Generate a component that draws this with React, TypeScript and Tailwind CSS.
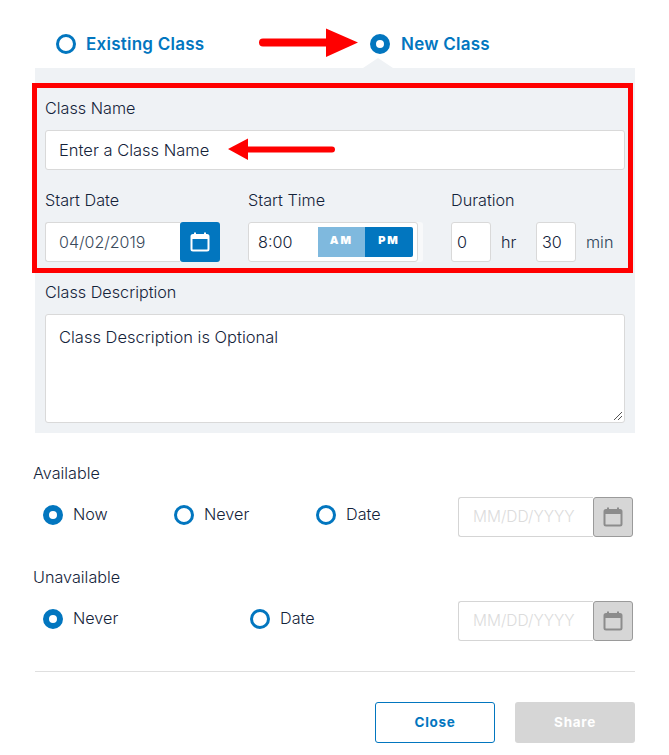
import React from "react";

function Radio({ on, label, bold, gap = "ml-[10px]" }: { on?: boolean; label: string; bold?: boolean; gap?: string }) {
  return (
    <div className="flex items-center">
      <span
        className={
          on
            ? "w-5 h-5 rounded-full border-[6px] border-[#0276bf] bg-white shrink-0"
            : "w-5 h-5 rounded-full border-[3px] border-[#0276bf] bg-white shrink-0"
        }
      />
      <span className={(bold ? "text-[17px] font-semibold tracking-[0.25px] mt-[1px] text-[#0276bf] " : "text-[16.2px] font-[350] -mt-[2px] text-[#14233a] ") + gap}>{label}</span>
    </div>
  );
}

function Cal({ color, className }: { color: string; className?: string }) {
  return (
    <svg width="20" height="20" viewBox="0 0 20 20" className={className} fill="none">
      <rect x="1.5" y="3" width="17" height="15.5" rx="1.5" stroke={color} strokeWidth="2" />
      <rect x="1.5" y="3" width="17" height="4" fill={color} />
      <rect x="4" y="0.5" width="2" height="3" fill={color} />
      <rect x="14" y="0.5" width="2" height="3" fill={color} />
    </svg>
  );
}

function DateDisabled() {
  return (
    <div className="flex w-[175px] h-10">
      <div className="w-[135px] h-10 border border-[#d5d5d5] rounded-l-[3px] border-r-0 bg-white pl-[14px] flex items-center text-[15.5px] font-[350] text-[#dcdcdc]">
        MM/DD/YYYY
      </div>
      <div className="w-10 h-10 bg-[#d6d6d6] border border-[#9a9a9a] rounded-[3px] flex items-center justify-center">
        <Cal color="#8c8c8c" />
      </div>
    </div>
  );
}

export default function App() {
  return (
    <div className="relative w-[669px] h-[755px] bg-white overflow-hidden font-['Inter','Noto_Sans',sans-serif] font-[350] text-[#14233a]">
      {/* top tabs */}
      <div className="h-[68px] pl-[56px] flex items-center pt-[20px] pb-0">
        <div className="flex items-center w-[314px]">
          <Radio label="Existing Class" bold />
        </div>
        <Radio on label="New Class" bold gap="ml-[11px]" />
      </div>

      {/* panel */}
      <div className="relative ml-[35px] w-[600px] h-[365px] bg-[#eff2f5] px-[10px] pt-[30px]">
        <div className="absolute left-[328px] -top-[10px] w-0 h-0 border-l-[15px] border-r-[15px] border-b-[10px] border-l-transparent border-r-transparent border-b-[#eff2f5]" />
        <div className="text-[16.2px] leading-5">Class Name</div>
        <div className="mt-[12px] h-10 w-[580px] bg-white border border-[#d9d9d9] rounded-[3px] pl-[13px] flex items-center text-[16.5px]">
          Enter a Class Name
        </div>

        <div className="flex mt-5">
          <div className="w-[203px]">
            <div className="text-[16.2px] leading-5">Start Date</div>
            <div className="mt-[12px] flex w-[175px] h-10">
              <div className="w-[135px] h-10 bg-white border border-[#d9d9d9] border-r-0 rounded-l-[3px] pl-[13px] flex items-center text-[16px] text-[#3a4a5c]">
                04/02/2019
              </div>
              <div className="w-10 h-10 bg-[#0276bf] rounded-[3px] flex items-center justify-center">
                <Cal color="#ffffff" />
              </div>
            </div>
          </div>

          <div className="w-[203px]">
            <div className="text-[16.2px] leading-5">Start Time</div>
            <div className="mt-[12px] w-[175px] h-10 flex items-center bg-[#f8f9fa] rounded-[3px]">
              <div className="w-[170px] h-10 bg-white border border-[#d9d9d9] rounded-[3px] pl-[9px] flex items-center text-[16.2px]">
                <span className="w-[60px]">8:00</span>
                <div className="flex h-[30px] w-[95px] text-[11px] font-black tracking-[2px] text-white">
                  <span className="w-[47px] bg-[#7fb9de] flex items-center justify-center pb-[3px]">AM</span>
                  <span className="w-[48px] bg-[#0276bf] rounded-r-[2px] flex items-center justify-center pb-[3px]">PM</span>
                </div>
              </div>
            </div>
          </div>

          <div>
            <div className="text-[16.2px] leading-5">Duration</div>
            <div className="mt-[12px] flex items-center h-10 text-[16.2px]">
              <div className="w-10 h-10 bg-white border border-[#d9d9d9] rounded-[3px] pl-[5px] flex items-center">0</div>
              <span className="ml-[10px] w-[35px]">hr</span>
              <div className="w-10 h-10 bg-white border border-[#d9d9d9] rounded-[3px] pl-[5px] flex items-center">30</div>
              <span className="ml-[10px] text-[#2c4258]">min</span>
            </div>
          </div>
        </div>

        <div className="mt-5 text-[16.2px] leading-5">Class Description</div>
        <div className="relative mt-[12px] w-[580px] h-[109px] bg-white border border-[#d9d9d9] rounded-[3px] pl-[13px] pt-[12px] text-[16.5px] leading-5">
          Class Description is Optional
          <svg width="10" height="10" viewBox="0 0 10 10" className="absolute right-[1px] bottom-[1px]">
            <path d="M1 9 L9 1 M5 9 L9 5" stroke="#555" strokeWidth="1" />
          </svg>
        </div>
      </div>

      {/* availability */}
      <div className="ml-[33px] w-[600px] mt-[30px]">
        <div className="text-[16.2px] leading-5">Available</div>
        <div className="flex items-start h-10 mt-[14px] pl-[10px]">
          <div className="w-[131px] h-9 flex items-center"><Radio on label="Now" /></div>
          <div className="w-[142px] h-9 flex items-center"><Radio label="Never" /></div>
          <div className="w-[142px] h-9 flex items-center"><Radio label="Date" /></div>
          <DateDisabled />
        </div>
        <div className="text-[16.2px] leading-5 mt-[30px]">Unavailable</div>
        <div className="flex items-start h-10 mt-[14px] pl-[10px]">
          <div className="w-[207px] h-9 flex items-center"><Radio on label="Never" /></div>
          <div className="w-[208px] h-9 flex items-center"><Radio label="Date" /></div>
          <DateDisabled />
        </div>
      </div>

      <div className="ml-[35px] w-[600px] h-px bg-[#dfdfdf] mt-[30px]" />

      <div className="ml-[375px] mt-[30px] flex gap-5">
        <div className="w-[120px] h-[41px] border border-[#0276bf] rounded-[3px] flex items-center justify-center text-[13.5px] font-bold tracking-[0.7px] text-[#0276bf]">
          Close
        </div>
        <div className="w-[120px] h-[41px] bg-[#d6d6d6] rounded-[3px] flex items-center justify-center text-[13.5px] font-bold tracking-[0.7px] text-white">
          Share
        </div>
      </div>

      {/* annotations */}
      <div className="absolute left-[32px] top-[83px] w-[601px] h-[190px] border-[5px] border-[#ff0000]" />
      <svg className="absolute left-[258px] top-[27px]" width="102" height="32" viewBox="0 0 102 32">
        <path d="M5 11.5 H68 V1.5 L100 15.5 L68 30 V19.5 H5 A4 4 0 0 1 5 11.5 Z" fill="#ff0000" />
      </svg>
      <svg className="absolute left-[227px] top-[137px]" width="110" height="24" viewBox="0 0 110 24">
        <path d="M1 12 L21 1.5 V9.5 H105 A2.5 2.5 0 0 1 105 15.5 H21 V23 Z" fill="#ff0000" />
      </svg>
    </div>
  );
}
